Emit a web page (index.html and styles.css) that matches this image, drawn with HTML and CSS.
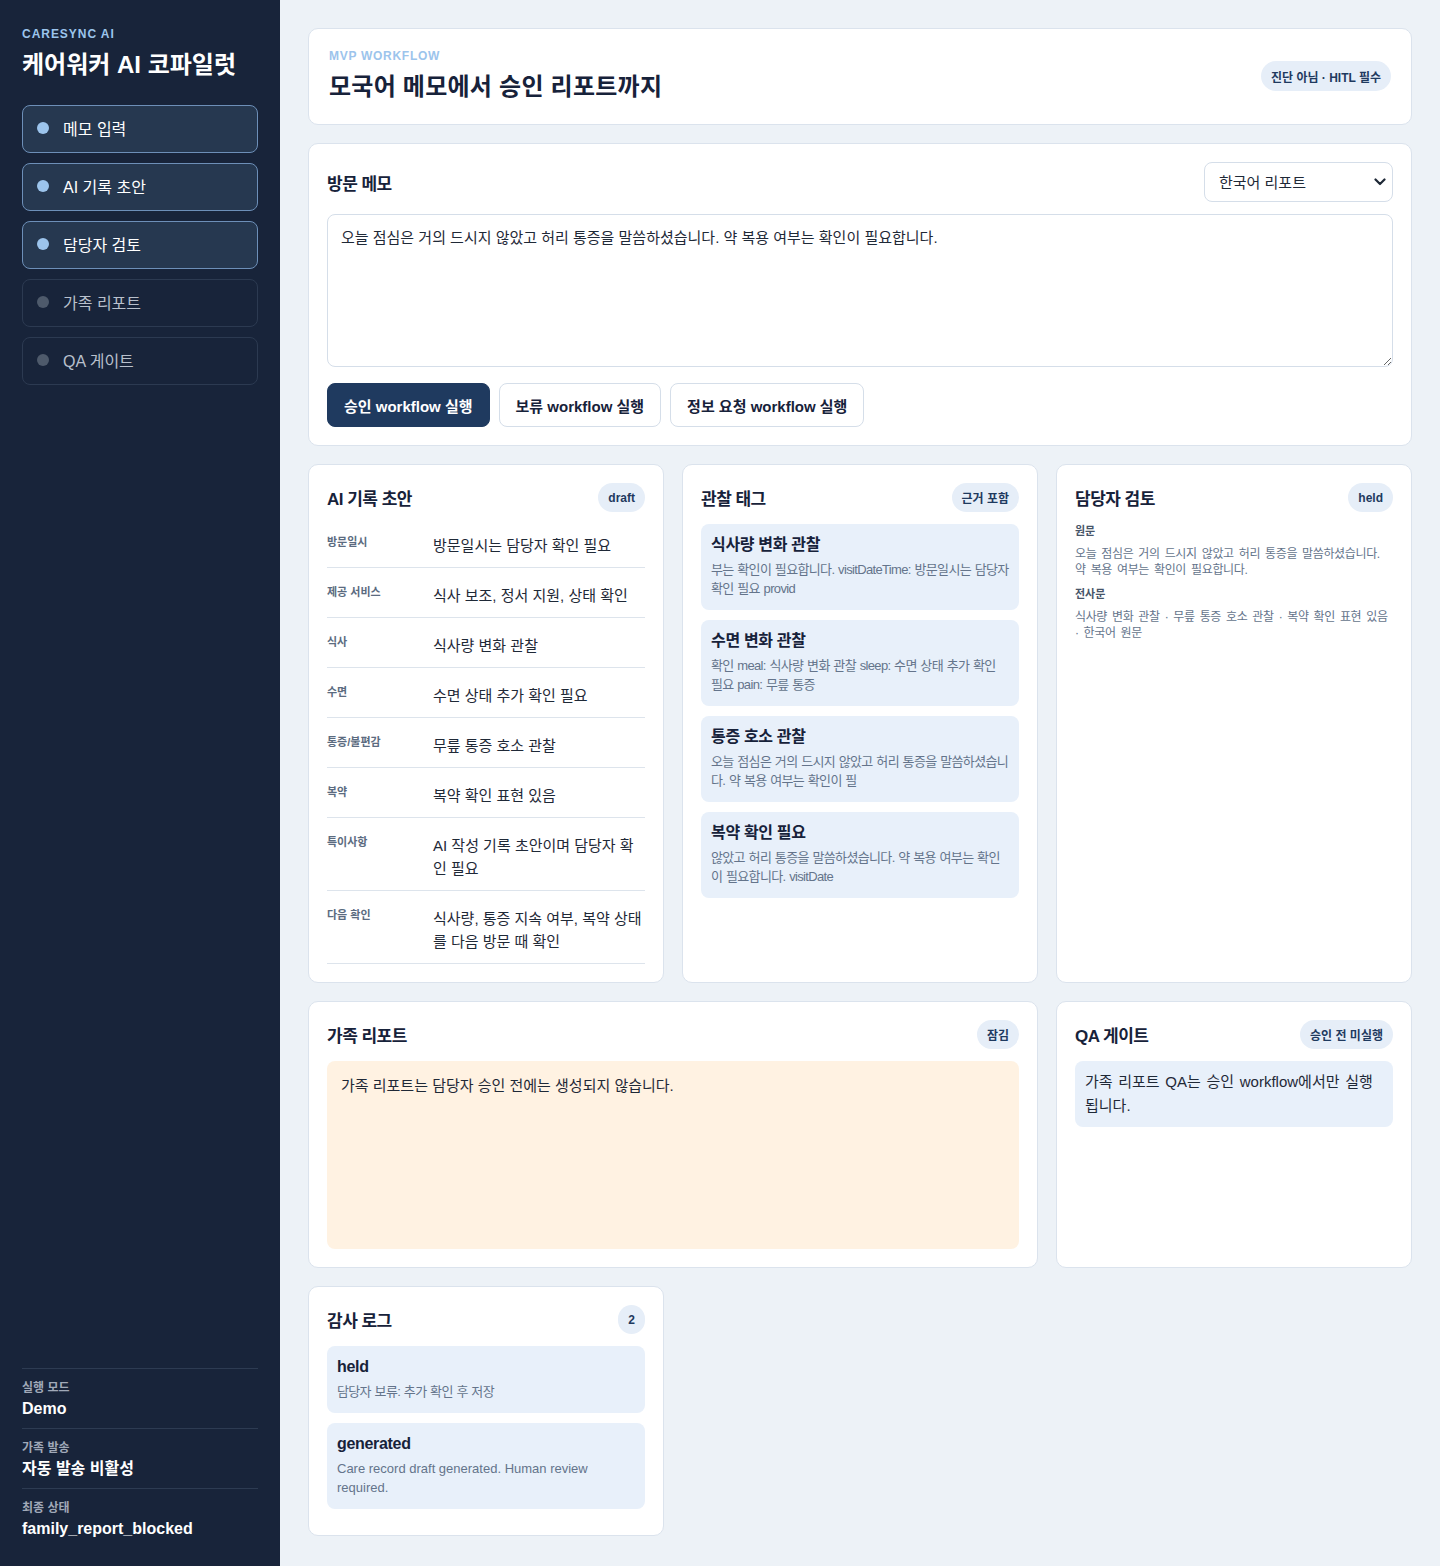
FILE: index.html
```html
<!DOCTYPE html>
<html lang="ko">
<head>
    <meta charset="UTF-8">
    <meta name="viewport" content="width=device-width, initial-scale=1.0">
    <title>CareSync AI - 케어워커 AI 코파일럿</title>
    <link rel="stylesheet" href="styles.css">
</head>
<body>
    <div class="layout">
        <aside class="sidebar">
            <p class="brand-eyebrow">CARESYNC AI</p>
            <h1 class="brand-title">케어워커 AI 코파일럿</h1>

            <nav class="steps">
                <div class="step on"><span class="dot"></span>메모 입력</div>
                <div class="step on"><span class="dot"></span>AI 기록 초안</div>
                <div class="step on"><span class="dot"></span>담당자 검토</div>
                <div class="step"><span class="dot"></span>가족 리포트</div>
                <div class="step"><span class="dot"></span>QA 게이트</div>
            </nav>

            <dl class="meta">
                <div class="meta-row">
                    <dt>실행 모드</dt>
                    <dd>Demo</dd>
                </div>
                <div class="meta-row">
                    <dt>가족 발송</dt>
                    <dd>자동 발송 비활성</dd>
                </div>
                <div class="meta-row">
                    <dt>최종 상태</dt>
                    <dd>family_report_blocked</dd>
                </div>
            </dl>
        </aside>

        <main class="main">
            <section class="card hero">
                <div>
                    <p class="hero-eyebrow">MVP WORKFLOW</p>
                    <h2 class="hero-title">모국어 메모에서 승인 리포트까지</h2>
                </div>
                <span class="pill pill-lg">진단 아님 · HITL 필수</span>
            </section>

            <section class="card">
                <div class="card-head memo-head">
                    <h3 class="card-title">방문 메모</h3>
                    <div class="select-wrap">
                        <select class="select">
                            <option>한국어 리포트</option>
                            <option>English report</option>
                        </select>
                        <svg class="chevron" width="12" height="8" viewBox="0 0 12 8"><path d="M1.5 1.5 6 6l4.5-4.5" fill="none" stroke="#1f2937" stroke-width="2.2" stroke-linecap="round" stroke-linejoin="round"/></svg>
                    </div>
                </div>
                <textarea class="memo-input">오늘 점심은 거의 드시지 않았고 허리 통증을 말씀하셨습니다. 약 복용 여부는 확인이 필요합니다.</textarea>
                <div class="actions">
                    <button class="btn btn-primary">승인 workflow 실행</button>
                    <button class="btn">보류 workflow 실행</button>
                    <button class="btn">정보 요청 workflow 실행</button>
                </div>
            </section>

            <div class="board">
                <section class="card">
                    <div class="card-head">
                        <h3 class="card-title">AI 기록 초안</h3>
                        <span class="pill">draft</span>
                    </div>
                    <dl class="record">
                        <div class="record-row"><dt>방문일시</dt><dd>방문일시는 담당자 확인 필요</dd></div>
                        <div class="record-row"><dt>제공 서비스</dt><dd>식사 보조, 정서 지원, 상태 확인</dd></div>
                        <div class="record-row"><dt>식사</dt><dd>식사량 변화 관찰</dd></div>
                        <div class="record-row"><dt>수면</dt><dd>수면 상태 추가 확인 필요</dd></div>
                        <div class="record-row"><dt>통증/불편감</dt><dd>무릎 통증 호소 관찰</dd></div>
                        <div class="record-row"><dt>복약</dt><dd>복약 확인 표현 있음</dd></div>
                        <div class="record-row"><dt>특이사항</dt><dd>AI 작성 기록 초안이며 담당자 확인 필요</dd></div>
                        <div class="record-row"><dt>다음 확인</dt><dd>식사량, 통증 지속 여부, 복약 상태를 다음 방문 때 확인</dd></div>
                    </dl>
                </section>

                <section class="card">
                    <div class="card-head">
                        <h3 class="card-title">관찰 태그</h3>
                        <span class="pill">근거 포함</span>
                    </div>
                    <div class="notes">
                        <div class="note">
                            <div class="note-title">식사량 변화 관찰</div>
                            <p class="note-text">부는 확인이 필요합니다. visitDateTime: 방문일시는 담당자 확인 필요 provid</p>
                        </div>
                        <div class="note">
                            <div class="note-title">수면 변화 관찰</div>
                            <p class="note-text">확인 meal: 식사량 변화 관찰 sleep: 수면 상태 추가 확인 필요 pain: 무릎 통증</p>
                        </div>
                        <div class="note">
                            <div class="note-title">통증 호소 관찰</div>
                            <p class="note-text">오늘 점심은 거의 드시지 않았고 허리 통증을 말씀하셨습니다. 약 복용 여부는 확인이 필</p>
                        </div>
                        <div class="note">
                            <div class="note-title">복약 확인 필요</div>
                            <p class="note-text">않았고 허리 통증을 말씀하셨습니다. 약 복용 여부는 확인이 필요합니다. visitDate</p>
                        </div>
                    </div>
                </section>

                <section class="card">
                    <div class="card-head">
                        <h3 class="card-title">담당자 검토</h3>
                        <span class="pill">held</span>
                    </div>
                    <div class="review-label">원문</div>
                    <p class="review-text">오늘 점심은 거의 드시지 않았고 허리 통증을 말씀하셨습니다. 약 복용 여부는 확인이 필요합니다.</p>
                    <div class="review-label">전사문</div>
                    <p class="review-text">식사량 변화 관찰 · 무릎 통증 호소 관찰 · 복약 확인 표현 있음 · 한국어 원문</p>
                </section>

                <section class="card wide">
                    <div class="card-head">
                        <h3 class="card-title">가족 리포트</h3>
                        <span class="pill">잠김</span>
                    </div>
                    <div class="locked">가족 리포트는 담당자 승인 전에는 생성되지 않습니다.</div>
                </section>

                <section class="card">
                    <div class="card-head">
                        <h3 class="card-title">QA 게이트</h3>
                        <span class="pill">승인 전 미실행</span>
                    </div>
                    <div class="qa-box">가족 리포트 QA는 승인 workflow에서만 실행됩니다.</div>
                </section>

                <section class="card card-log">
                    <div class="card-head">
                        <h3 class="card-title">감사 로그</h3>
                        <span class="pill">2</span>
                    </div>
                    <div class="notes">
                        <div class="note">
                            <div class="note-title">held</div>
                            <p class="note-text">담당자 보류: 추가 확인 후 저장</p>
                        </div>
                        <div class="note">
                            <div class="note-title">generated</div>
                            <p class="note-text note-en" lang="en">Care record draft generated. Human review required.</p>
                        </div>
                    </div>
                </section>
            </div>
        </main>
    </div>
</body>
</html>
```

FILE: styles.css
```css
* {
    box-sizing: border-box;
}
body {
    margin: 0;
    font-family: "Liberation Sans", "Noto Sans CJK KR", sans-serif;
    background: #edf2f7;
    color: #1f2937;
}
.layout {
    display: grid;
    grid-template-columns: 280px 1fr;
    min-height: 100vh;
}

/* sidebar */
.sidebar {
    background: #18243a;
    color: #fff;
    padding: 27px 22px 26px;
    display: flex;
    flex-direction: column;
}
.brand-eyebrow {
    margin: 0;
    font-size: 12px;
    line-height: 14px;
    font-weight: 700;
    letter-spacing: 0.08em;
    color: #9cc4ec;
}
.brand-title {
    margin: 8px 0 0;
    font-size: 24px;
    line-height: 32px;
    font-weight: 700;
}
.steps {
    margin-top: 24px;
    display: flex;
    flex-direction: column;
    gap: 10px;
}
.step {
    display: flex;
    align-items: center;
    gap: 14px;
    height: 48px;
    padding: 0 14px 2px;
    border: 1px solid #2c3a51;
    border-radius: 8px;
    font-size: 16px;
    color: #b8c0cc;
}
.step.on {
    background: #263850;
    border-color: #6d8fb8;
    color: #fff;
}
.dot {
    width: 12px;
    height: 12px;
    border-radius: 50%;
    background: #4e5a6b;
}
.step.on .dot { background: #9cc4ec; }
.meta {
    margin: auto 0 0;
}
.meta-row {
    border-top: 1px solid #2d3b52;
    padding: 11px 0 8px;
}
.meta-row:last-child { padding-bottom: 0; }
.meta dt {
    font-size: 12px;
    line-height: 16px;
    font-weight: 700;
    color: #a0a9b8;
}
.meta dd {
    margin: 2px 0 0;
    font-size: 16px;
    line-height: 22px;
    font-weight: 700;
}

/* main */
.main {
    padding: 28px;
    display: flex;
    flex-direction: column;
    gap: 18px;
}
.card {
    background: #fff;
    border: 1px solid #dbe3ed;
    border-radius: 10px;
    padding: 18px;
}
.hero {
    padding: 20px 20px 21px;
    display: flex;
    justify-content: space-between;
    align-items: center;
}
.hero-eyebrow {
    margin: 0;
    font-size: 12px;
    line-height: 14px;
    font-weight: 700;
    letter-spacing: 0.06em;
    color: #9cc4ec;
}
.hero-title {
    margin: 8px 0 0;
    font-size: 24px;
    line-height: 32px;
    font-weight: 700;
    color: #17223a;
    letter-spacing: 0.01em;
}
.card-head {
    display: flex;
    justify-content: space-between;
    align-items: center;
    min-height: 29px;
    margin-bottom: 12px;
}
.card-title {
    margin: 0;
    font-size: 17px;
    font-weight: 700;
    color: #17223a;
    letter-spacing: -0.03em;
}
.pill {
    display: inline-flex;
    align-items: center;
    height: 29px;
    padding: 0 10px;
    border-radius: 999px;
    background: #e6eef8;
    color: #1f3a5f;
    font-size: 12px;
    font-weight: 700;
}
.pill-lg { height: 30px; }

/* memo */
.memo-head { min-height: 40px; }
.select-wrap {
    position: relative;
    width: 189px;
}
.select {
    width: 100%;
    height: 40px;
    appearance: none;
    padding: 0 30px 0 14px;
    border: 1px solid #d5dee9;
    border-radius: 8px;
    background: #fff;
    font: inherit;
    font-size: 15px;
    color: #1f2937;
}
.chevron {
    position: absolute;
    right: 7px;
    top: 16px;
    pointer-events: none;
}
.memo-input {
    display: block;
    width: 100%;
    height: 153px;
    padding: 12px 13px;
    border: 1px solid #d5dee9;
    border-radius: 8px;
    font: inherit;
    font-size: 15px;
    line-height: 22px;
    color: #1f2937;
    resize: vertical;
}
.actions {
    margin-top: 16px;
    display: flex;
    gap: 9px;
}
.btn {
    height: 44px;
    padding: 0 16px;
    border: 1px solid #d5dee9;
    border-radius: 8px;
    background: #fff;
    font: inherit;
    font-size: 15px;
    font-weight: 700;
    color: #17223a;
    cursor: pointer;
}
.btn-primary {
    background: #1f3a5f;
    border-color: #1f3a5f;
    color: #fff;
}

/* result cards */
.board {
    display: grid;
    grid-template-columns: repeat(3, 1fr);
    gap: 18px;
}
.wide { grid-column: span 2; }
.card-log { padding-bottom: 26px; }
.record { margin: 0; }
.record-row {
    display: grid;
    grid-template-columns: 106px 1fr;
    padding: 16px 0 10px;
    border-bottom: 1px solid #dde4ec;
}
.record-row:first-child { padding-top: 10px; }
.record dt {
    font-size: 11px;
    line-height: 16px;
    font-weight: 700;
    color: #5b6b80;
}
.record dd {
    margin: 0;
    font-size: 15px;
    line-height: 23px;
    color: #1f2937;
}
.notes {
    display: flex;
    flex-direction: column;
    gap: 10px;
}
.note {
    background: #e8f0fa;
    border-radius: 8px;
    padding: 10px 10px 12px;
}
.note-title {
    font-size: 16px;
    line-height: 22px;
    font-weight: 700;
    color: #17223a;
    letter-spacing: -0.02em;
}
.note-text {
    margin: 4px 0 0;
    font-size: 13px;
    line-height: 19px;
    color: #64748b;
    letter-spacing: -0.05em;
    word-spacing: 0.7px;
}
.note-en {
    letter-spacing: 0;
    word-spacing: 0;
}
.review-label {
    font-size: 11px;
    line-height: 14px;
    font-weight: 700;
    color: #475569;
}
.review-text {
    margin: 8px 0 9px;
    font-size: 12px;
    line-height: 16px;
    color: #64748b;
    letter-spacing: -0.03em;
    word-spacing: 2px;
}
.locked {
    min-height: 188px;
    padding: 14px;
    border-radius: 8px;
    background: #fff2e2;
    font-size: 15px;
    line-height: 22px;
}
.qa-box {
    padding: 9px 10px;
    border-radius: 8px;
    background: #e8f0fa;
    font-size: 15px;
    line-height: 24px;
    word-spacing: 1.5px;
}
```
